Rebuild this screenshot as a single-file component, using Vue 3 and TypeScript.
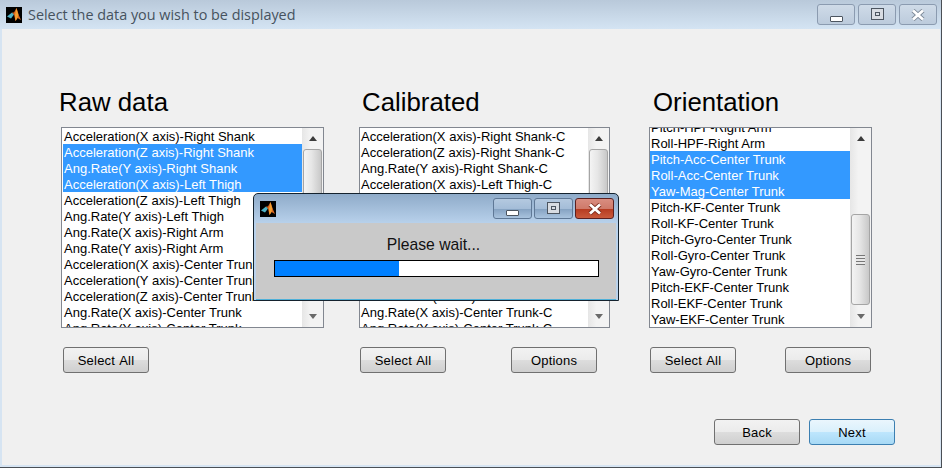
<script setup lang="ts">
interface Column {
  title: string
  items: string[]
  selected: number[]
  offset: number
  thumbTop: number
  thumbHeight: number
  grip: boolean
  options: boolean
  kind: string
}

const rawItems = [
  'Acceleration(X axis)-Right Shank',
  'Acceleration(Z axis)-Right Shank',
  'Ang.Rate(Y axis)-Right Shank',
  'Acceleration(X axis)-Left Thigh',
  'Acceleration(Z axis)-Left Thigh',
  'Ang.Rate(Y axis)-Left Thigh',
  'Ang.Rate(X axis)-Right Arm',
  'Ang.Rate(Y axis)-Right Arm',
  'Acceleration(X axis)-Center Trunk',
  'Acceleration(Y axis)-Center Trunk',
  'Acceleration(Z axis)-Center Trunk',
  'Ang.Rate(X axis)-Center Trunk',
  'Ang.Rate(Y axis)-Center Trunk'
]

const orientationItems = [
  'Pitch-HPF-Right Arm',
  'Roll-HPF-Right Arm',
  'Pitch-Acc-Center Trunk',
  'Roll-Acc-Center Trunk',
  'Yaw-Mag-Center Trunk',
  'Pitch-KF-Center Trunk',
  'Roll-KF-Center Trunk',
  'Pitch-Gyro-Center Trunk',
  'Roll-Gyro-Center Trunk',
  'Yaw-Gyro-Center Trunk',
  'Pitch-EKF-Center Trunk',
  'Roll-EKF-Center Trunk',
  'Yaw-EKF-Center Trunk'
]

const columns: Column[] = [
  {
    title: 'Raw data',
    items: rawItems,
    selected: [1, 2, 3],
    offset: 0,
    thumbTop: 0,
    thumbHeight: 90,
    grip: false,
    options: false,
    kind: 'raw'
  },
  {
    title: 'Calibrated',
    items: rawItems.map((item) => `${item}-C`),
    selected: [],
    offset: 0,
    thumbTop: 0,
    thumbHeight: 90,
    grip: false,
    options: true,
    kind: 'calibrated'
  },
  {
    title: 'Orientation',
    items: orientationItems,
    selected: [2, 3, 4],
    offset: -9,
    thumbTop: 65,
    thumbHeight: 91,
    grip: true,
    options: true,
    kind: 'orientation'
  }
]

const progress = 38.5
</script>

<template>
  <div class="window">
    <header class="titlebar">
      <svg class="logo" viewBox="0 0 16 16" width="16" height="16">
        <rect width="16" height="16" fill="#000" />
        <path d="M1 9.5 6 5.5 8 7.5 5 11.5Z" fill="#4fb3c8" />
        <path d="M6 5.5 8 5.5 10.5 1 13 8.5 15 13 11.5 11 9.5 14 8 7.5Z" fill="#d9661f" />
        <path d="M10.5 1 12.2 7.5 11.5 11 9.5 14 9 8Z" fill="#f5a030" />
      </svg>
      <span class="window-title">Select the data you wish to be displayed</span>
      <div class="caption-buttons">
        <span class="caption-btn"><i class="glyph-min"></i></span>
        <span class="caption-btn"><i class="glyph-max"></i></span>
        <span class="caption-btn">
          <svg class="glyph-close" viewBox="0 0 14 12" width="14" height="12">
            <path d="M2 1.5 12 10.5M12 1.5 2 10.5" stroke="#7b8796" stroke-width="4.4" />
            <path d="M2 1.5 12 10.5M12 1.5 2 10.5" stroke="#fff" stroke-width="2.8" />
          </svg>
        </span>
      </div>
    </header>

    <main class="content">
      <div class="columns">
        <section v-for="col in columns" :key="col.kind" class="column" :class="col.kind">
          <h2 class="column-title">{{ col.title }}</h2>
          <div class="listbox">
            <ul class="rows" :style="{ marginTop: col.offset + 'px' }">
              <li
                v-for="(item, i) in col.items"
                :key="item"
                class="row"
                :class="{ selected: col.selected.includes(i) }"
              >{{ item }}</li>
            </ul>
            <div class="scrollbar">
              <span class="arrow up"></span>
              <div class="track">
                <div
                  class="thumb"
                  :style="{ marginTop: col.thumbTop + 'px', height: col.thumbHeight + 'px' }"
                >
                  <i v-if="col.grip" class="grip"></i>
                </div>
              </div>
              <span class="arrow down"></span>
            </div>
          </div>
          <div class="column-actions">
            <button class="btn">Select All</button>
            <button v-if="col.options" class="btn">Options</button>
          </div>
        </section>
      </div>

      <footer class="footer">
        <button class="btn">Back</button>
        <button class="btn primary">Next</button>
      </footer>
    </main>

    <div class="dialog">
      <div class="dialog-titlebar">
        <svg class="dialog-logo" viewBox="0 0 16 16" width="16" height="16">
          <rect width="16" height="16" fill="#000" />
          <path d="M1 9.5 6 5.5 8 7.5 5 11.5Z" fill="#4fb3c8" />
          <path d="M6 5.5 8 5.5 10.5 1 13 8.5 15 13 11.5 11 9.5 14 8 7.5Z" fill="#d9661f" />
          <path d="M10.5 1 12.2 7.5 11.5 11 9.5 14 9 8Z" fill="#f5a030" />
        </svg>
        <div class="caption-buttons">
          <span class="caption-btn active"><i class="glyph-min"></i></span>
          <span class="caption-btn active"><i class="glyph-max"></i></span>
          <span class="caption-btn danger">
            <svg class="glyph-close" viewBox="0 0 14 12" width="14" height="12">
              <path d="M2 1.5 12 10.5M12 1.5 2 10.5" stroke="#7a2a1c" stroke-width="4.4" />
              <path d="M2 1.5 12 10.5M12 1.5 2 10.5" stroke="#fff" stroke-width="2.8" />
            </svg>
          </span>
        </div>
      </div>
      <div class="dialog-body">
        <p class="wait-text">Please wait...</p>
        <div class="progress">
          <div class="progress-fill" :style="{ width: progress + '%' }"></div>
        </div>
      </div>
    </div>
  </div>
</template>

<style>
html,
body {
  margin: 0;
  background: #fff;
  overflow: hidden;
}
</style>

<style scoped>
.window {
  position: relative;
  width: 942px;
  height: 468px;
  box-sizing: border-box;
  display: flex;
  flex-direction: column;
  background: #f0f0f0;
  border-right: 1px solid #4a4f55;
  border-bottom: 1px solid #4a4f55;
  font-family: "Liberation Sans", Arial, sans-serif;
  color: #000;
}

.titlebar {
  height: 29px;
  flex: none;
  display: flex;
  align-items: center;
  padding-left: 6px;
  background: linear-gradient(#b9c9da, #d4e4f3);
}

.logo {
  flex: none;
  margin-top: 1px;
}

.window-title {
  margin-left: 6px;
  font-family: "Open Sans", "Noto Sans", sans-serif;
  font-size: 14.4px;
  color: #46525e;
}

.caption-buttons {
  margin-left: auto;
  margin-right: 4px;
  align-self: flex-start;
  margin-top: 4px;
  display: flex;
  gap: 3px;
}

.caption-btn {
  width: 38px;
  height: 21px;
  box-sizing: border-box;
  display: flex;
  align-items: center;
  justify-content: center;
  border: 1px solid #8b9bb0;
  border-radius: 3px;
  background: linear-gradient(#cfdbe8, #bccbdc);
}

.glyph-min {
  width: 13px;
  height: 6px;
  margin-top: 8px;
  box-sizing: border-box;
  background: #fff;
  border: 1px solid #4c5560;
  border-radius: 1px;
}

.glyph-max {
  width: 13px;
  height: 12px;
  box-sizing: border-box;
  margin-top: -2px;
  border: 1px solid #4c5560;
  background: #d8dce2;
  position: relative;
}

.glyph-max::after {
  content: "";
  position: absolute;
  left: 3px;
  top: 3px;
  width: 5px;
  height: 4px;
  border: 1px solid #4c5560;
  box-sizing: border-box;
}

.glyph-close {
  display: block;
}

.content {
  flex: 1;
  min-height: 0;
  box-sizing: border-box;
  display: flex;
  flex-direction: column;
  border: solid #d6e4f2;
  border-width: 0 1px 2px 2px;
}

.columns {
  display: flex;
  padding-top: 58px;
  padding-left: 59px;
}

.column {
  display: flex;
  flex-direction: column;
}

.column.raw {
  width: 263px;
}

.column.calibrated {
  width: 251px;
  margin-left: 35px;
}

.column.orientation {
  width: 223px;
  margin-left: 39px;
}

.column-title {
  height: 30px;
  margin: 0 0 10px;
  font-size: 25.8px;
  font-weight: normal;
  line-height: 30px;
  white-space: nowrap;
}

.raw .column-title {
  margin-left: -2px;
}

.calibrated .column-title {
  margin-left: 3px;
}

.orientation .column-title {
  margin-left: 4px;
}

.listbox {
  height: 201px;
  box-sizing: border-box;
  display: flex;
  overflow: hidden;
  background: #fff;
  border: 1px solid #828790;
}

.rows {
  flex: 1;
  min-width: 0;
  list-style: none;
  margin: 0;
  padding: 0;
}

.raw .rows {
  margin-left: 1px;
}

.row {
  height: 16px;
  padding-left: 1px;
  font-size: 13px;
  line-height: 17px;
  white-space: nowrap;
}

.row.selected {
  background: #3399ff;
  color: #fff;
}

.scrollbar {
  flex: none;
  width: 21px;
  height: 199px;
  box-sizing: border-box;
  display: flex;
  flex-direction: column;
  align-items: stretch;
  padding: 0 1px;
  background: linear-gradient(90deg, #e6e6e6, #f3f3f3 40%, #f3f3f3);
}

.arrow {
  flex: none;
  height: 21px;
  display: flex;
  align-items: center;
  justify-content: center;
}

.arrow::before {
  content: "";
  border-left: 4px solid transparent;
  border-right: 4px solid transparent;
}

.arrow.up::before {
  border-bottom: 5px solid #3c3c3c;
}

.arrow.down::before {
  border-top: 5px solid #6a6a6a;
}

.track {
  flex: 1;
  min-height: 0;
}

.thumb {
  box-sizing: border-box;
  display: flex;
  align-items: center;
  justify-content: center;
  border: 1px solid #a5a5a5;
  border-radius: 3px;
  background: linear-gradient(90deg, #f4f4f4, #e6e6e6 45%, #c8c8c8);
}

.grip {
  width: 9px;
  height: 10px;
  background: repeating-linear-gradient(#777 0 1px, #e8e8e8 1px 3px);
}

.column-actions {
  margin-top: 19px;
  display: flex;
  justify-content: space-between;
  padding: 0 1px;
}

.raw .column-actions {
  padding-left: 2px;
}

.calibrated .column-actions {
  padding-right: 13px;
}

.btn {
  width: 86px;
  height: 26px;
  box-sizing: border-box;
  padding: 0;
  border: 1px solid #707070;
  border-radius: 3px;
  background: linear-gradient(#f2f2f2, #ebebeb 50%, #dddddd 50%, #cfcfcf);
  font-family: "Liberation Sans", Arial, sans-serif;
  font-size: 13px;
  letter-spacing: 0.2px;
  word-spacing: 1px;
  color: #000;
}

.btn.primary {
  border-color: #3c7fb1;
  background: linear-gradient(#eaf6fd, #d9f0fc 50%, #bee6fd 50%, #a7d9f5);
}

.footer {
  margin-top: 46px;
  padding-right: 45px;
  display: flex;
  justify-content: flex-end;
  gap: 9px;
}

/* floats over the main window */
.dialog {
  position: absolute;
  left: 253px;
  top: 193px;
  width: 366px;
  height: 108px;
  box-sizing: border-box;
  display: flex;
  flex-direction: column;
  padding: 0 2px;
  border: 1px solid #14222e;
  border-radius: 5px 5px 0 0;
  background: linear-gradient(#8fabc9, #b9d2ec 30px);
}

.dialog-titlebar {
  flex: none;
  height: 29px;
  display: flex;
  align-items: center;
  padding-left: 4px;
}

.dialog-logo {
  flex: none;
}

.dialog-titlebar .caption-buttons {
  margin-right: 2px;
  gap: 2px;
}

.caption-btn.active {
  width: 39px;
  border-color: #5f7896;
  background: linear-gradient(#b4c9e0, #a4bdd8 50%, #83a0c0 50%, #a9c3de);
}

.caption-btn.danger {
  width: 39px;
  border-color: #5b2020;
  background: linear-gradient(#d98d80, #cf7a6a 50%, #b5391f 50%, #c95a3c);
}

.dialog-body {
  flex: 1;
  background: #c9c9c9;
  border-bottom: 1px solid #4fb0d8;
  display: flex;
  flex-direction: column;
  align-items: center;
}

.wait-text {
  margin: 12px 5px 0 0;
  font-size: 15.7px;
  line-height: 20px;
  color: #111;
}

.progress {
  width: 325px;
  height: 17px;
  margin-top: 5px;
  box-sizing: border-box;
  border: 1px solid #000;
  background: #fff;
}

.progress-fill {
  height: 100%;
  background: #0080ff;
}
</style>
